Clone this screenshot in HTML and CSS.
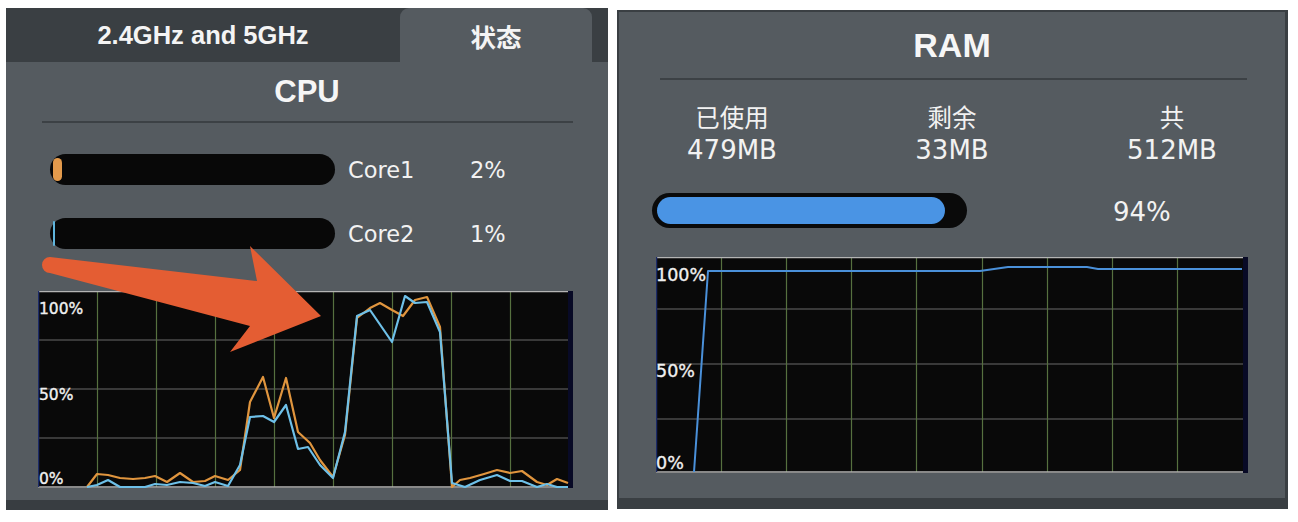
FILE: index.html
```html
<!DOCTYPE html>
<html lang="zh">
<head>
<meta charset="utf-8">
<title>CPU / RAM</title>
<link rel="stylesheet" href="styles.css">
</head>
<body>
<div class="page">
  <section class="panel cpu-panel">
    <div class="tabs">
      <div class="tab">2.4GHz and 5GHz</div>
      <div class="tab active">状态</div>
    </div>
    <div class="cpu-body">
      <h2 class="title">CPU</h2>
      <div class="sep cpu-sep"></div>
      <div class="core-row first">
        <div class="bar"><div class="fill fill-orange"></div></div>
        <span class="core-label">Core1</span>
        <span class="core-val">2%</span>
      </div>
      <div class="core-row second">
        <div class="bar"><div class="fill fill-blue"></div></div>
        <span class="core-label">Core2</span>
        <span class="core-val">1%</span>
      </div>
      <div class="chart cpu-chart">
        <svg width="535" height="197" viewBox="38 291 535 197">
          <rect class="bg" x="38" y="291" width="530" height="197"/>
          <g class="hgrid">
            <line x1="38" y1="340" x2="568" y2="340"/>
            <line x1="38" y1="389" x2="568" y2="389"/>
            <line x1="38" y1="438" x2="568" y2="438"/>
          </g>
          <g class="vgrid">
            <line x1="97.5" y1="291" x2="97.5" y2="487"/>
            <line x1="156.5" y1="291" x2="156.5" y2="487"/>
            <line x1="215.5" y1="291" x2="215.5" y2="487"/>
            <line x1="274.5" y1="291" x2="274.5" y2="487"/>
            <line x1="333.5" y1="291" x2="333.5" y2="487"/>
            <line x1="392.5" y1="291" x2="392.5" y2="487"/>
            <line x1="451.5" y1="291" x2="451.5" y2="487"/>
            <line x1="510.5" y1="291" x2="510.5" y2="487"/>
          </g>
          <line class="edge" x1="38" y1="291.5" x2="568" y2="291.5"/>
          <line class="edge" x1="38" y1="487" x2="568" y2="487"/>
          <line class="ledge" x1="38.5" y1="291" x2="38.5" y2="487"/>
          <rect class="redge" x="568" y="291" width="5" height="197"/>
          <text class="axis small" x="39" y="314">100%</text>
          <text class="axis small" x="39" y="400">50%</text>
          <text class="axis small" x="39" y="484">0%</text>
          <polyline class="line-orange" points="87,487 97,474 108,475 120,478 133,479 145,478 155,476 167,482 180,473 193,482 205,481 215,476 228,480 240,470 250,402 263,377 274,418 286,378 298,432 310,443 320,460 333,477 345,435 357,318 370,308 380,303 392,310 403,316 415,300 427,297 440,327 452,487 460,480 470,478 484,474 497,470 510,473 522,471 537,482 547,485 557,479 568,483"/>
          <polyline class="line-blue" points="87,487 97,485 108,480 120,487 145,487 155,484 167,485 180,482 193,483 205,486 215,482 228,486 240,465 250,417 263,416 274,422 286,405 298,449 308,447 320,465 333,478 345,432 357,316 370,310 392,342 405,296 415,303 427,302 440,332 452,483 465,487 480,480 497,475 510,481 522,481 537,487 547,484 557,487 568,487"/>
        </svg>
      </div>
    </div>
    <svg class="arrow" width="602" height="502" viewBox="6 8 602 502">
      <path d="M50 257 L257 281 L250 246 L321 316 L230 352 L250 326 L50 273 A8 8 0 0 1 50 257 Z"/>
    </svg>
  </section>

  <section class="panel ram-panel">
    <h2 class="ram-title">RAM</h2>
    <div class="sep ram-sep"></div>
    <div class="stats">
      <div class="stat">
        <div class="stat-label">已使用</div>
        <div class="stat-value">479MB</div>
      </div>
      <div class="stat">
        <div class="stat-label">剩余</div>
        <div class="stat-value">33MB</div>
      </div>
      <div class="stat">
        <div class="stat-label">共</div>
        <div class="stat-value">512MB</div>
      </div>
    </div>
    <div class="ram-row">
      <div class="ram-bar"><div class="ram-fill"></div></div>
      <span class="ram-pct">94%</span>
    </div>
    <div class="chart ram-chart">
      <svg width="592" height="216" viewBox="656 260 592 216">
        <rect class="bg" x="656" y="260" width="587" height="216"/>
        <g class="hgrid">
          <line x1="656" y1="312" x2="1243" y2="312"/>
          <line x1="656" y1="367" x2="1243" y2="367"/>
          <line x1="656" y1="422" x2="1243" y2="422"/>
        </g>
        <g class="vgrid">
          <line x1="721.5" y1="260" x2="721.5" y2="475"/>
          <line x1="786.5" y1="260" x2="786.5" y2="475"/>
          <line x1="851.5" y1="260" x2="851.5" y2="475"/>
          <line x1="916.5" y1="260" x2="916.5" y2="475"/>
          <line x1="982.5" y1="260" x2="982.5" y2="475"/>
          <line x1="1047.5" y1="260" x2="1047.5" y2="475"/>
          <line x1="1112.5" y1="260" x2="1112.5" y2="475"/>
          <line x1="1177.5" y1="260" x2="1177.5" y2="475"/>
        </g>
        <line class="edge" x1="656" y1="260.5" x2="1243" y2="260.5"/>
        <line class="edge" x1="656" y1="475" x2="1243" y2="475"/>
        <line class="ledge" x1="656.5" y1="260" x2="656.5" y2="475"/>
        <rect class="redge" x="1243" y="260" width="5" height="216"/>
        <text class="axis big" x="656" y="284">100%</text>
        <text class="axis big" x="656" y="380">50%</text>
        <text class="axis big" x="656" y="472">0%</text>
        <polyline class="line-ram" points="694,475 708,274 980,274 1008,270 1087,270 1098,272 1242,272"/>
      </svg>
    </div>
  </section>
</div>
</body>
</html>
```

FILE: styles.css
```css
html, body {
  margin: 0;
  padding: 0;
}

body {
  background: #ffffff;
  color: #f2f2f2;
  font-family: "DejaVu Sans", "Noto Sans CJK SC", sans-serif;
}

.page {
  display: flex;
  align-items: flex-start;
  gap: 9px;
  padding: 8px 0 0 6px;
}

.panel {
  box-sizing: border-box;
}

/* ---------- CPU panel ---------- */
.cpu-panel {
  position: relative;
  width: 602px;
  height: 502px;
  background: #383d41;
  display: flex;
  flex-direction: column;
}

.tabs {
  height: 54px;
  display: flex;
  background: #3a3f43;
}

.tab {
  width: 394px;
  display: flex;
  align-items: center;
  justify-content: center;
  font-family: "Liberation Sans", "Noto Sans CJK SC", sans-serif;
  font-weight: bold;
  font-size: 25.5px;
  color: #f4f4f4;
}

.tab.active {
  width: 192px;
  background: #555b60;
  border-radius: 9px 9px 0 0;
}

.cpu-body {
  height: 438px;
  background: #555b60;
  display: flex;
  flex-direction: column;
}

.title {
  margin: 12px 0 0;
  text-align: center;
  font-family: "Liberation Sans", sans-serif;
  font-weight: bold;
  font-size: 31px;
  line-height: 36px;
  color: #f6f6f6;
}

.sep {
  height: 2px;
  background: #3c4145;
}

.cpu-sep {
  margin: 11px 35px 0 36px;
}

.core-row {
  display: flex;
  align-items: center;
  height: 31px;
  margin-left: 44px;
}

.core-row.first {
  margin-top: 31px;
}

.core-row.second {
  margin-top: 33px;
}

.bar {
  box-sizing: border-box;
  width: 285px;
  height: 31px;
  border-radius: 16px;
  background: #080808;
  display: flex;
  align-items: center;
  padding-left: 3px;
}

.fill {
  border-radius: 5px;
}

.fill-orange {
  width: 9px;
  height: 23px;
  background: #e39a4c;
}

.fill-blue {
  width: 2px;
  height: 25px;
  border-radius: 1px;
  background: #5fb4dc;
}

.core-label {
  width: 122px;
  margin-left: 13px;
  font-size: 22.5px;
}

.core-val {
  font-size: 22.5px;
}

.chart svg {
  display: block;
}

.cpu-chart {
  margin: 42px 0 0 32px;
}

.bg {
  fill: #090909;
}

.hgrid line {
  stroke: #4a4a4a;
  stroke-width: 1.5;
}

.vgrid line {
  stroke: #56703f;
  stroke-width: 1.2;
}

.edge {
  stroke: #b4b4b4;
  stroke-width: 1.5;
}

.ledge {
  stroke: #1c2b68;
  stroke-width: 1.5;
}

.redge {
  fill: #080a26;
}

.axis {
  fill: #f0f0f0;
  font-family: "DejaVu Sans", sans-serif;
  font-weight: normal;
  stroke: #f0f0f0;
  stroke-width: 0.35;
}

.axis.small {
  font-size: 15.5px;
}

.axis.big {
  font-size: 17.5px;
}

.line-orange {
  fill: none;
  stroke: #e0953e;
  stroke-width: 2.2;
  stroke-linejoin: round;
}

.line-blue {
  fill: none;
  stroke: #6ec0e8;
  stroke-width: 2.2;
  stroke-linejoin: round;
}

.line-ram {
  fill: none;
  stroke: #4a90d9;
  stroke-width: 2;
  stroke-linejoin: round;
}

.arrow {
  position: absolute;
  left: 0;
  top: 0;
  pointer-events: none;
}

.arrow path {
  fill: #e45d33;
}

/* ---------- RAM panel ---------- */
.ram-panel {
  margin-top: 2px;
  width: 671px;
  height: 499px;
  border-style: solid;
  border-color: #3a3f43;
  border-width: 2px 3px 11px 2px;
  background: #555b60;
  display: flex;
  flex-direction: column;
}

.ram-title {
  margin: 13px 0 0;
  text-align: center;
  font-family: "Liberation Sans", sans-serif;
  font-weight: bold;
  font-size: 34px;
  line-height: 40px;
  color: #f6f6f6;
}

.ram-sep {
  margin: 13px 38px 0 41px;
}

.stats {
  display: grid;
  grid-template-columns: repeat(3, 220px);
  justify-content: center;
  margin-top: 20px;
}

.stat {
  text-align: center;
}

.stat-label {
  font-family: "Noto Sans CJK SC", sans-serif;
  font-size: 24.5px;
  line-height: 34px;
}

.stat-value {
  font-family: "DejaVu Sans", sans-serif;
  font-size: 26px;
  line-height: 32px;
}

.ram-row {
  display: flex;
  align-items: center;
  margin: 27px 0 0 33px;
}

.ram-bar {
  box-sizing: border-box;
  width: 315px;
  height: 35px;
  border-radius: 18px;
  background: #0a0a0a;
  display: flex;
  align-items: center;
  padding-left: 5px;
}

.ram-fill {
  width: 288px;
  height: 27px;
  border-radius: 14px;
  background: #4a94e4;
}

.ram-pct {
  margin-left: 146px;
  margin-top: 2px;
  font-size: 26px;
}

.ram-chart {
  margin: 29px 0 0 37px;
}
```
